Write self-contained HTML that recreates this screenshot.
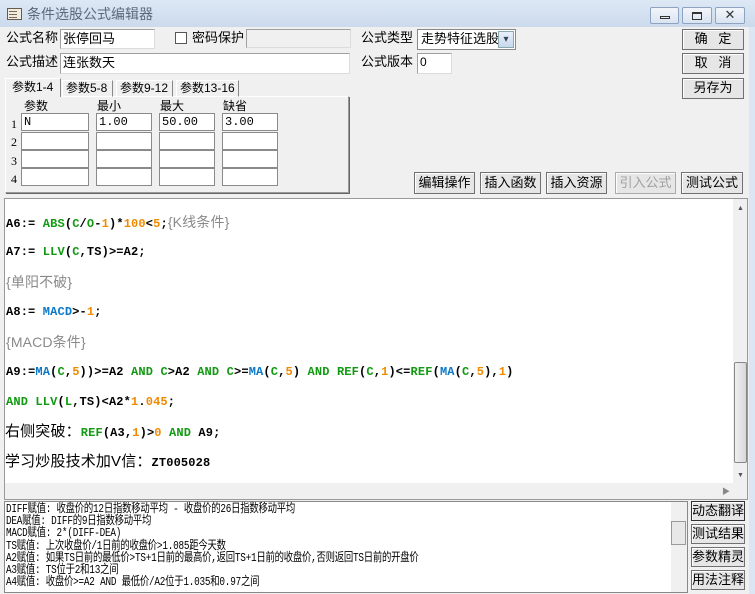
<!DOCTYPE html>
<html><head><meta charset="utf-8">
<style>
*{box-sizing:border-box;margin:0;padding:0}
body{width:755px;height:594px;overflow:hidden;background:#dbe6f4;font-family:"Liberation Sans","Noto Sans CJK SC",sans-serif;font-size:12px;color:#000;position:relative}
.a{position:absolute}
.win{left:0;top:27px;width:749px;height:567px;background:#f0f0f0}
.title{left:0;top:0;width:755px;height:27px;background:linear-gradient(#dde8f5,#cbdaec)}
.in{position:absolute;background:#fff;border:1px solid #a0a0a0;border-right-color:#dcdcdc;border-bottom-color:#dcdcdc;font-size:13px;padding-left:2px;line-height:17px}
.btn{position:absolute;background:#e6e6e6;border:1px solid #707070;box-shadow:inset 1px 1px #fff;text-align:center;font-size:13px;line-height:17px}
.lbl{position:absolute;font-size:13px;line-height:14px}
.pin{position:absolute;background:#fff;border:1px solid #8a8a8a;font-family:"Liberation Mono","Noto Sans CJK SC",monospace;font-size:12px;padding-left:2px;line-height:16px}
.code{position:absolute;left:6px;font-family:"Liberation Mono","Noto Sans CJK SC",monospace;font-size:12px;font-weight:bold;white-space:pre;line-height:16px;letter-spacing:0.15px}
.g{color:#119a11}.o{color:#f28a00}.b{color:#0a78c8}.c{color:#8a8a8a;font-weight:normal}
.cn{font-family:"Liberation Sans","Noto Sans CJK SC",sans-serif;font-weight:normal;font-size:15px}
.wb{position:absolute;top:7px;height:17px;border:1px solid #8ea3c0;border-radius:2px;background:linear-gradient(#f2f6fb,#d9e4f1)}
</style></head><body>
<div class="a title"></div>
<div class="a" style="left:7px;top:8px;width:15px;height:12px;border:1px solid #6a5a4a;background:#f0ece0"></div>
<div class="a" style="left:9px;top:11px;width:8px;height:1px;background:#7a6a5a;box-shadow:0 3px #7a6a5a,0 6px #7a6a5a"></div>
<div class="a" style="left:27px;top:6px;font-size:14px;line-height:16px;color:#5a6a7a">条件选股公式编辑器</div>
<div class="wb" style="left:650px;width:29px"><div class="a" style="left:9px;top:8px;width:10px;height:3px;border:1px solid #333"></div></div>
<div class="wb" style="left:682px;width:30px"><div class="a" style="left:9px;top:4px;width:10px;height:8px;border:1px solid #333;border-top-width:2px"></div></div>
<div class="wb" style="left:715px;width:30px;text-align:center;line-height:14px;font-size:13px;color:#333">✕</div>
<div class="a win"></div>

<div class="lbl" style="left:6px;top:31px">公式名称</div>
<div class="in" style="left:60px;top:29px;width:95px;height:20px">张停回马</div>
<div class="a" style="left:175px;top:32px;width:12px;height:12px;border:1px solid #555;background:#fff"></div>
<div class="lbl" style="left:192px;top:31px">密码保护</div>
<div class="in" style="left:246px;top:29px;width:105px;height:19px;background:#f0f0f0"></div>
<div class="lbl" style="left:361px;top:31px">公式类型</div>
<div class="in" style="left:417px;top:29px;width:99px;height:21px;border-color:#888;padding-left:3px">走势特征选股</div>
<div class="a" style="left:498px;top:31px;width:16px;height:17px;background:linear-gradient(#e8f0fa,#c8d8ee);border:1px solid #8aa;color:#345;font-size:10px;text-align:center;line-height:15px">▾</div>
<div class="lbl" style="left:6px;top:55px">公式描述</div>
<div class="in" style="left:60px;top:53px;width:290px;height:21px">连张数天</div>
<div class="lbl" style="left:361px;top:55px">公式版本</div>
<div class="in" style="left:417px;top:53px;width:35px;height:21px;font-size:12px">0</div>

<div class="btn" style="left:682px;top:29px;width:62px;height:21px">确&nbsp;&nbsp;&nbsp;定</div>
<div class="btn" style="left:682px;top:53px;width:62px;height:21px">取&nbsp;&nbsp;&nbsp;消</div>
<div class="btn" style="left:682px;top:78px;width:62px;height:21px">另存为</div>

<!-- tabs -->
<div class="a" style="left:5px;top:96px;width:344px;height:97px;border:1px solid #999;border-top-color:#fff;border-left-color:#fff;box-shadow:1px 1px #666"></div>
<div class="a" style="left:5px;top:78px;width:56px;height:19px;background:#f0f0f0;border:1px solid #fff;border-bottom:none;border-right:1px solid #888;font-size:12px;padding-left:6px;line-height:16px">参数1-4</div>
<div class="a" style="left:62px;top:80px;width:51px;height:17px;border:1px solid #fff;border-right:1px solid #888;font-size:12px;padding-left:3px;line-height:15px">参数5-8</div>
<div class="a" style="left:116px;top:80px;width:57px;height:17px;border:1px solid #fff;border-right:1px solid #888;font-size:12px;padding-left:3px;line-height:15px">参数9-12</div>
<div class="a" style="left:176px;top:80px;width:63px;height:17px;border:1px solid #fff;border-right:1px solid #888;font-size:12px;padding-left:3px;line-height:15px">参数13-16</div>
<div class="lbl" style="left:24px;top:99px;font-size:12px">参数</div>
<div class="lbl" style="left:97px;top:99px;font-size:12px">最小</div>
<div class="lbl" style="left:160px;top:99px;font-size:12px">最大</div>
<div class="lbl" style="left:223px;top:99px;font-size:12px">缺省</div>
<div class="a" style="left:11px;top:115px;font-family:'Liberation Serif';font-size:12px;line-height:18.3px">1<br>2<br>3<br>4</div>
<div class="pin" style="left:21px;top:113px;width:68px;height:18px">N</div>
<div class="pin" style="left:96px;top:113px;width:56px;height:18px">1.00</div>
<div class="pin" style="left:159px;top:113px;width:56px;height:18px">50.00</div>
<div class="pin" style="left:222px;top:113px;width:56px;height:18px">3.00</div>
<div class="pin" style="left:21px;top:132px;width:68px;height:18px"></div><div class="pin" style="left:96px;top:132px;width:56px;height:18px"></div><div class="pin" style="left:159px;top:132px;width:56px;height:18px"></div><div class="pin" style="left:222px;top:132px;width:56px;height:18px"></div>
<div class="pin" style="left:21px;top:150px;width:68px;height:18px"></div><div class="pin" style="left:96px;top:150px;width:56px;height:18px"></div><div class="pin" style="left:159px;top:150px;width:56px;height:18px"></div><div class="pin" style="left:222px;top:150px;width:56px;height:18px"></div>
<div class="pin" style="left:21px;top:168px;width:68px;height:18px"></div><div class="pin" style="left:96px;top:168px;width:56px;height:18px"></div><div class="pin" style="left:159px;top:168px;width:56px;height:18px"></div><div class="pin" style="left:222px;top:168px;width:56px;height:18px"></div>

<div class="btn" style="left:414px;top:172px;width:61px;height:22px;line-height:19px">编辑操作</div>
<div class="btn" style="left:480px;top:172px;width:61px;height:22px;line-height:19px">插入函数</div>
<div class="btn" style="left:546px;top:172px;width:61px;height:22px;line-height:19px">插入资源</div>
<div class="btn" style="left:615px;top:172px;width:61px;height:22px;line-height:19px;color:#a0a0a0;border-color:#aaa">引入公式</div>
<div class="btn" style="left:681px;top:172px;width:62px;height:22px;line-height:19px">测试公式</div>

<!-- editor -->
<div class="a" style="left:4px;top:198px;width:744px;height:302px;border:1px solid #999;background:#fff"></div>
<div class="a" style="left:733px;top:199px;width:14px;height:284px;background:#f0f0f0"></div>
<div class="a" style="left:734px;top:362px;width:13px;height:101px;border:1px solid #888;border-radius:2px;background:linear-gradient(90deg,#f0f0f0,#d8d8d8)"></div>
<div class="a" style="left:737px;top:205px;font-size:7px;color:#555">▲</div>
<div class="a" style="left:737px;top:472px;font-size:7px;color:#555">▼</div>
<div class="a" style="left:5px;top:483px;width:742px;height:16px;background:#f0f0f0"></div>
<div class="a" style="left:722px;top:486px;font-size:8px;color:#888">▶</div>

<div class="code" style="top:214px">A6:= <span class="g">ABS</span>(<span class="g">C</span>/<span class="g">O</span>-<span class="o">1</span>)*<span class="o">100</span>&lt;<span class="o">5</span>;<span class="c cn" style="color:#8a8a8a;font-size:14px">{K线条件}</span></div>
<div class="code" style="top:244px">A7:= <span class="g">LLV</span>(<span class="g">C</span>,TS)&gt;=A2;</div>
<div class="code c cn" style="top:274px;font-size:14px;color:#8a8a8a">{单阳不破}</div>
<div class="code" style="top:304px">A8:= <span class="b">MACD</span>&gt;-<span class="o">1</span>;</div>
<div class="code c cn" style="top:334px;font-size:14px;color:#8a8a8a">{MACD条件}</div>
<div class="code" style="top:364px">A9:=<span class="b">MA</span>(<span class="g">C</span>,<span class="o">5</span>))&gt;=A2 <span class="g">AND</span> <span class="g">C</span>&gt;A2 <span class="g">AND</span> <span class="g">C</span>&gt;=<span class="b">MA</span>(<span class="g">C</span>,<span class="o">5</span>) <span class="g">AND</span> <span class="g">REF</span>(<span class="g">C</span>,<span class="o">1</span>)&lt;=<span class="g">REF</span>(<span class="b">MA</span>(<span class="g">C</span>,<span class="o">5</span>),<span class="o">1</span>)</div>
<div class="code" style="top:394px"><span class="g">AND</span> <span class="g">LLV</span>(<span class="g">L</span>,TS)&lt;A2*<span class="o">1</span>.<span class="o">045</span>;</div>
<div class="code" style="top:424px;left:5px"><span class="cn">右侧突破：</span><span class="g">REF</span>(A3,<span class="o">1</span>)&gt;<span class="o">0</span> <span class="g">AND</span> A9;</div>
<div class="code" style="top:454px;left:5px"><span class="cn">学习炒股技术加V信：</span>ZT005028</div>

<!-- bottom -->
<div class="a" style="left:4px;top:501px;width:684px;height:92px;border:1px solid #888;background:#fff"></div>
<div class="a" style="left:671px;top:502px;width:16px;height:90px;background:#f0f0f0"></div>
<div class="a" style="left:671px;top:521px;width:15px;height:24px;border:1px solid #999;background:#e8e8e8"></div>
<div class="a" style="left:6px;top:503px;font-family:'Liberation Mono','Noto Sans CJK SC',monospace;font-size:12px;line-height:12.2px;white-space:pre;transform:scaleX(0.78);transform-origin:0 0;letter-spacing:-0.3px">DIFF赋值: 收盘价的12日指数移动平均 - 收盘价的26日指数移动平均
DEA赋值: DIFF的9日指数移动平均
MACD赋值: 2*(DIFF-DEA)
TS赋值: 上次收盘价/1日前的收盘价&gt;1.085距今天数
A2赋值: 如果TS日前的最低价&gt;TS+1日前的最高价,返回TS+1日前的收盘价,否则返回TS日前的开盘价
A3赋值: TS位于2和13之间
A4赋值: 收盘价&gt;=A2 AND 最低价/A2位于1.035和0.97之间</div>
<div class="btn" style="left:691px;top:501px;width:54px;height:20px;font-size:13px;border-color:#333">动态翻译</div>
<div class="btn" style="left:691px;top:524px;width:54px;height:20px">测试结果</div>
<div class="btn" style="left:691px;top:547px;width:54px;height:20px">参数精灵</div>
<div class="btn" style="left:691px;top:570px;width:54px;height:20px">用法注释</div>
</body></html>
